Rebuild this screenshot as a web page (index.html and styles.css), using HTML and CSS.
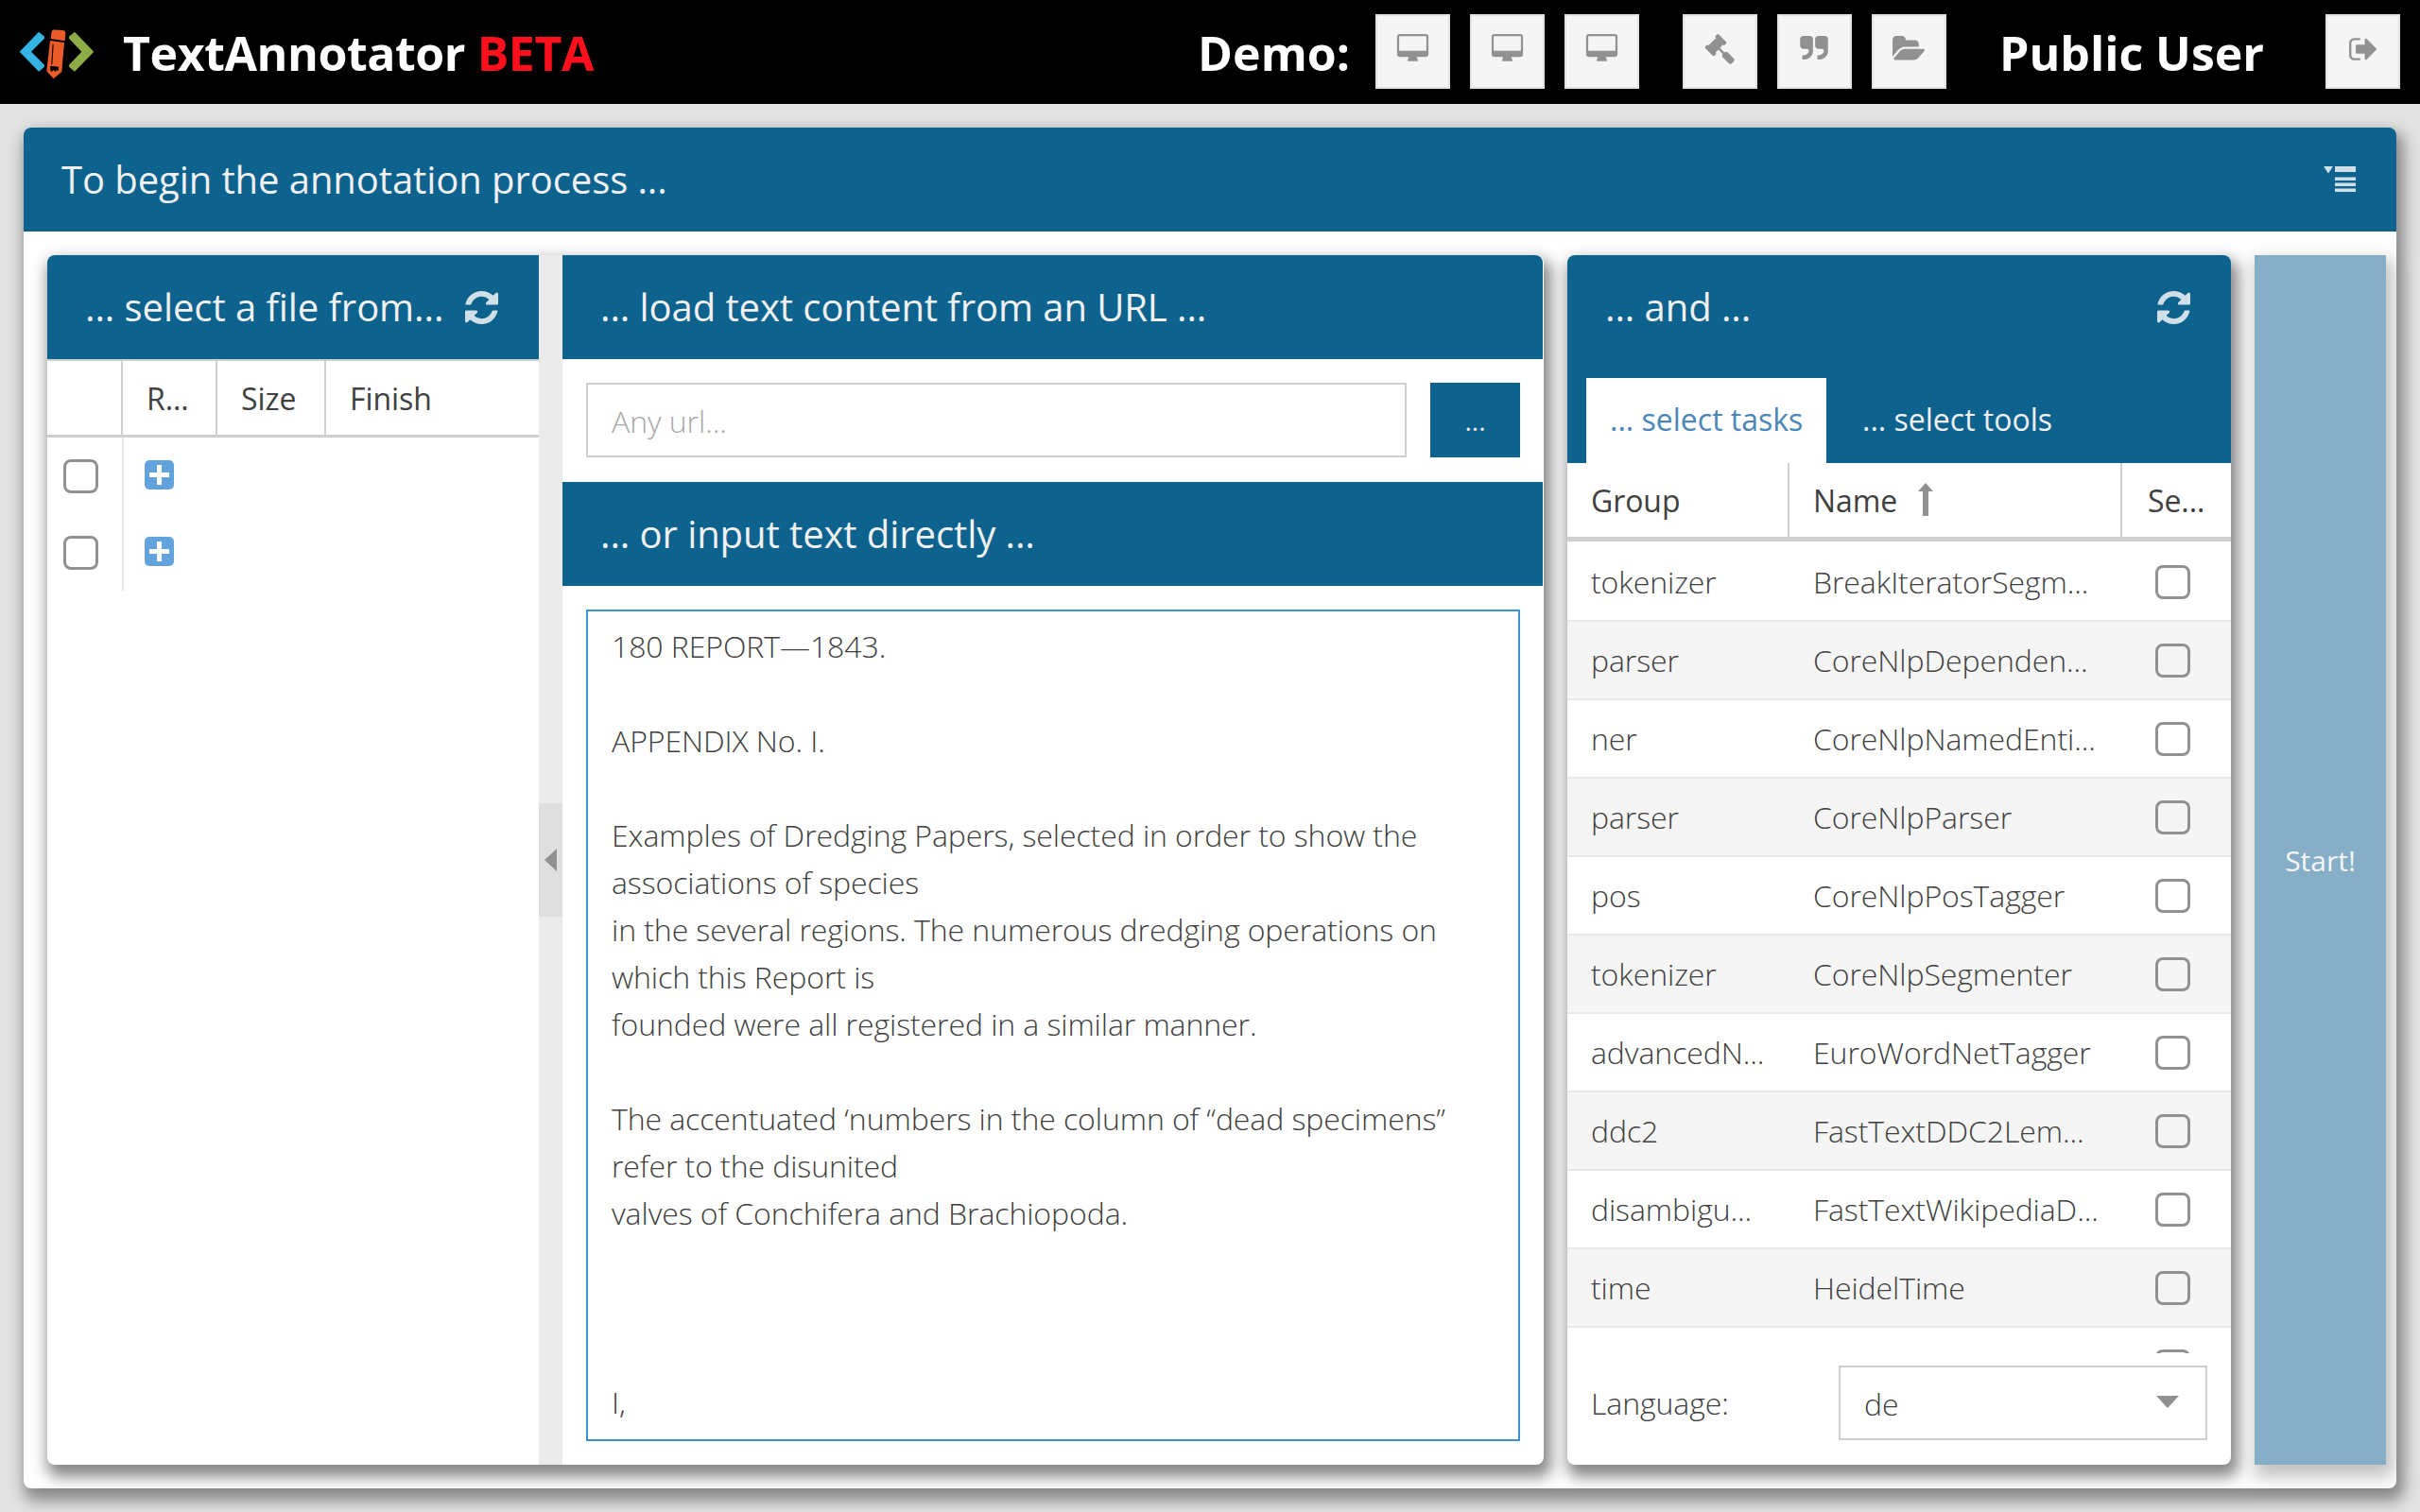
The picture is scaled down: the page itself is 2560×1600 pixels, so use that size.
FILE: index.html
```html
<!DOCTYPE html>
<html lang="en">
<head>
<meta charset="utf-8">
<title>TextAnnotator</title>
<link rel="stylesheet" href="styles.css">
</head>
<body>
<svg class="defs" aria-hidden="true">
  <symbol id="desktop" viewBox="0 0 1920 1792"><path d="M1792 992V160q0-13-9.500-22.500T1760 128H160q-13 0-22.500 9.500T128 160v832q0 13 9.500 22.500t22.500 9.500h1600q13 0 22.500-9.500t9.500-22.500zm128-832v1088q0 66-47 113t-113 47h-544q0 37 16 77.500t32 71 16 43.500q0 26-19 45t-45 19H704q-26 0-45-19t-19-45q0-14 16-44t32-70 16-78H160q-66 0-113-47T0 1248V160Q0 94 47 47T160 0h1600q66 0 113 47t47 113z"/></symbol>
  <symbol id="gavel" viewBox="0 0 1792 1792"><path d="M1771 1536q0 53-37 90l-107 108q-39 37-91 37-53 0-90-37l-363-364q-38-36-38-90 0-53 43-96L832 928l-126 126q-14 14-34 14t-34-14q2 2 12.500 12t12.500 13 10 11.500 10 13.500 6 13.500 5.500 16.500 1.500 18q0 38-28 68-3 3-16.500 18t-19 20.500-18.500 16.500-22 15.500-22 9-26 4.500q-40 0-68-28L68 858q-28-28-28-68 0-13 4.500-26t9-22 15.500-22 16.500-18.500 20.500-19 18-16.500q30-28 68-28 10 0 18 1.500t16.500 5.500 13.500 6 13.500 10 11.500 10 13 12.500 12 12.500q-14-14-14-34t14-34l348-348q14-14 34-14t34 14q-2-2-12.500-12T681 235t-10-11.500-10-13.500-6-13.500-5.500-16.500-1.500-18q0-38 28-68 3-3 16.500-18t19-20.500T730 39t22-15.500 22-9T800 10q40 0 68 28l408 408q28 28 28 68 0 13-4.500 26t-9 22-15.500 22-16.500 18.500-20.500 19-18 16.500q-30 28-68 28-10 0-18-1.500t-16.500-5.500-13.500-6-13.500-10-11.500-10-13-12.500-12-12.500q14 14 14 34t-14 34L928 832l256 256q43-43 96-43 52 0 91 37l363 363q37 39 37 91z"/></symbol>
  <symbol id="quote" viewBox="0 0 1664 1408"><path d="M768 192v704q0 104-40.500 198.500T618 1258t-163.500 109.500T256 1408h-64q-26 0-45-19t-19-45v-128q0-26 19-45t45-19h64q106 0 181-75t75-181v-32q0-40-28-68t-68-28H192q-80 0-136-56T0 576V192Q0 112 56 56T192 0h384q80 0 136 56t56 136zm896 0v704q0 104-40.500 198.500T1514 1258t-163.500 109.500T1152 1408h-64q-26 0-45-19t-19-45v-128q0-26 19-45t45-19h64q106 0 181-75t75-181v-32q0-40-28-68t-68-28h-224q-80 0-136-56t-56-136V192q0-80 56-136t136-56h384q80 0 136 56t56 136z"/></symbol>
  <symbol id="folder" viewBox="0 0 1879 1408"><path d="M1879 808q0 31-31 66l-336 396q-43 51-120.500 86.500T1248 1392H160q-34 0-60.500-13T73 1336q0-31 31-66l336-396q43-51 120.500-86.500T704 752h1088q34 0 60.500 13t26.500 43zM1536 464v160H704q-94 0-197 47.500T343 791L6 1187l-5 6q0-4-.5-12.500T0 1168V208q0-92 66-158T224-16h320q92 0 158 66t66 158v32h544q92 0 158 66t66 158z"/></symbol>
  <symbol id="signout" viewBox="0 0 1568 1280"><path d="M640 1184q0 4 1 20t.5 26.500-3 23.500-10 19.500-20.500 6.500H288q-119 0-203.500-84.500T0 992V288Q0 169 84.500 84.500T288 0h320q13 0 22.500 9.500T640 32q0 4 1 20t.5 26.500-3 23.500-10 19.500T608 128H288q-66 0-113 47t-47 113v704q0 66 47 113t113 47h312l11.500 1 11.500 3 8 5.500 7 9 2 13.500zm928-544q0 26-19 45l-544 544q-19 19-45 19t-45-19-19-45V896H448q-26 0-45-19t-19-45V448q0-26 19-45t45-19h448V96q0-26 19-45t45-19 45 19l544 544q19 19 19 45z"/></symbol>
  <symbol id="refresh" viewBox="0 0 1536 1536"><path d="M1511 928q0 5-1 7-64 268-268 434.500T764 1536q-146 0-282.500-55T238 1324l-129 129q-19 19-45 19t-45-19-19-45V960q0-26 19-45t45-19h448q26 0 45 19t19 45-19 45l-137 137q71 66 161 102t187 36q134 0 250-65t186-179q11-17 53-117 8-23 30-23h192q13 0 22.500 9.500t9.500 22.500zm25-800v448q0 26-19 45t-45 19h-448q-26 0-45-19t-19-45 19-45l138-138Q969 256 768 256q-134 0-250 65T332 500q-11 17-53 117-8 23-30 23H50q-13 0-22.500-9.500T18 608v-7q65-268 270-434.500T768 0q146 0 284 55.500T1297 212l130-129q19-19 45-19t45 19 19 45z"/></symbol>
</svg>

<header class="topbar">
  <svg class="logo" viewBox="0 0 80 72">
    <path d="M21 14.700 27 19.700V21.700L13 35.700 27 49.700V51.700L21 56.700.7 35.700z" fill="#34b4e3"/>
    <path d="M59 14.700 53 19.700V21.700L66.300 35.700 53 49.700V51.700L59 56.700 79.300 35.700z" fill="#8dab46"/>
    <path d="M37 12.600 46.500 13q3 .5 2.900 3.500L48.700 24.300 33.700 22 34.500 15q.3-2.500 2.500-2.400zM33 24 48 26 45.300 57 36.700 64.200 29.300 56.300z" fill="#ea5b27"/>
    <path d="M35.600 27.700h1.100L35.300 49.300h-1.100zM33.300 50.700 42 51.700 41.700 56.300 40 55 38.700 57 36.700 55 34.700 57 33 55z"/>
  </svg>
  <h1 class="brand">TextAnnotator <span class="beta">BETA</span></h1>
  <div class="demo">Demo:</div>
  <div class="tools">
    <button class="tool"><svg class="i-desktop"><use href="#desktop"/></svg></button>
    <button class="tool"><svg class="i-desktop"><use href="#desktop"/></svg></button>
    <button class="tool"><svg class="i-desktop"><use href="#desktop"/></svg></button>
  </div>
  <div class="tools second">
    <button class="tool"><svg class="i-gavel"><use href="#gavel"/></svg></button>
    <button class="tool"><svg class="i-quote"><use href="#quote"/></svg></button>
    <button class="tool"><svg class="i-folder"><use href="#folder"/></svg></button>
  </div>
  <div class="user">Public User</div>
  <button class="tool"><svg class="i-signout"><use href="#signout"/></svg></button>
</header>

<main class="panel main">
  <div class="bar main-bar">
    <span>To begin the annotation process ...</span>
    <svg class="menu" viewBox="0 0 34 28"><path d="M0 0h10L5 7.500zM12 0h22v6H12zM12 11.500h22v3.500H12zM12 17.500h22V21H12zM12 23.500h22V27H12z"/></svg>
  </div>
  <div class="content">
    <div class="panel source">
      <section class="files">
        <div class="bar"><span class="title">... select a file from...</span><svg class="refresh"><use href="#refresh"/></svg></div>
        <div class="file-grid file-head"><div></div><div>R...</div><div>Size</div><div>Finish</div></div>
        <div class="file-grid file-row"><div><i class="check"></i></div><div><i class="plus"></i></div></div>
        <div class="file-grid file-row"><div><i class="check"></i></div><div><i class="plus"></i></div></div>
      </section>
      <div class="splitter"><div class="handle"><i></i></div></div>
      <section class="text">
        <div class="bar">... load text content from an URL ...</div>
        <div class="url-row"><div class="url">Any url...</div><button class="go">...</button></div>
        <div class="bar">... or input text directly ...</div>
        <div class="area-wrap"><div class="area">180 REPORT—1843.

APPENDIX No. I.

Examples of Dredging Papers, selected in order to show the associations of species
in the several regions. The numerous dredging operations on which this Report is
founded were all registered in a similar manner.

The accentuated ‘numbers in the column of “dead specimens” refer to the disunited
valves of Conchifera and Brachiopoda.



I,</div></div>
      </section>
    </div>
    <section class="panel tasks">
      <div class="bar"><span>... and ...</span><svg class="refresh"><use href="#refresh"/></svg></div>
      <div class="tabs"><div class="tab active">... select tasks</div><div class="tab">... select tools</div></div>
      <div class="task-grid task-head"><div>Group</div><div>Name<svg class="sort" viewBox="0 0 16 36"><path d="M8 0l8 9H11v26H5V9H0z"/></svg></div><div>Se...</div></div>
      <div class="task-list">
        <div class="task-grid"><div>tokenizer</div><div>BreakIteratorSegm...</div><div><i class="check"></i></div></div>
        <div class="task-grid"><div>parser</div><div>CoreNlpDependen...</div><div><i class="check"></i></div></div>
        <div class="task-grid"><div>ner</div><div>CoreNlpNamedEnti...</div><div><i class="check"></i></div></div>
        <div class="task-grid"><div>parser</div><div>CoreNlpParser</div><div><i class="check"></i></div></div>
        <div class="task-grid"><div>pos</div><div>CoreNlpPosTagger</div><div><i class="check"></i></div></div>
        <div class="task-grid"><div>tokenizer</div><div>CoreNlpSegmenter</div><div><i class="check"></i></div></div>
        <div class="task-grid"><div>advancedN...</div><div>EuroWordNetTagger</div><div><i class="check"></i></div></div>
        <div class="task-grid"><div>ddc2</div><div>FastTextDDC2Lem...</div><div><i class="check"></i></div></div>
        <div class="task-grid"><div>disambigu...</div><div>FastTextWikipediaD...</div><div><i class="check"></i></div></div>
        <div class="task-grid"><div>time</div><div>HeidelTime</div><div><i class="check"></i></div></div>
        <div class="task-grid"><div></div><div></div><div><i class="check"></i></div></div>
      </div>
      <div class="language"><span>Language:</span><div class="combo">de<i></i></div></div>
    </section>
    <button class="start">Start!</button>
  </div>
</main>
</body>
</html>
```
FILE: styles.css
```css
* { box-sizing: border-box; }
body {
  margin: 0; width: 2560px; height: 1600px; overflow: hidden;
  display: flex; flex-direction: column;
  background: #e3e3e3; color: #404040;
  font: 300 32px/44px "Open Sans", sans-serif;
  letter-spacing: -.08px;
}
button { font: inherit; padding: 0; border: 0; }
.defs { display: none; }

.topbar {
  height: 110px; flex: none; padding: 0 21px 0 20px; background: #000; color: #fff;
  display: flex; align-items: center; font-size: 50px; font-weight: 700; letter-spacing: 0;
}
.logo { width: 80px; height: 72px; }
.brand { margin: 2px auto 0 30px; font-size: 50px; line-height: 68px; letter-spacing: -.42px; }
.beta { color: #ff0e1b; }
.demo, .user { line-height: 68px; margin-top: 2px; }
.demo { margin-right: 27px; }
.tools { display: flex; gap: 21px; }
.second { margin: 0 56px 0 46px; }
.user { margin-right: 65px; }
.tool {
  width: 79px; height: 79px; margin-bottom: 1px; padding-bottom: 8px;
  display: flex; align-items: center; justify-content: center;
  background: #f5f5f5; border: 2px solid #e1e1e1;
}
.tool svg { fill: #919191; }
.i-desktop { width: 35px; height: 31px; margin-top: 2px; }
.i-gavel { width: 32px; height: 32px; margin-top: 2px; }
.i-quote { width: 30px; height: 25px; }
.i-folder { width: 34px; height: 26px; overflow: visible; }
.i-signout { width: 29px; height: 24px; margin-top: 2px; }

.panel { background: #fff; border-radius: 8px; box-shadow: 4px 9px 16px 4px #888; }
.main { width: 2510px; height: 1440px; margin: 25px 0 0 25px; display: flex; flex-direction: column; }
.bar {
  height: 110px; flex: none; padding: 0 40px; background: #0d628e; color: #f0f0f0;
  display: flex; align-items: center; justify-content: space-between;
  font-size: 40px; font-weight: 400; line-height: 54px; white-space: nowrap;
}
.main-bar { border-radius: 8px 8px 0 0; }
.menu { width: 34px; height: 28px; margin-right: 3px; fill: #cfe0e8; }
.refresh { width: 35px; height: 35px; fill: #cfe0e8; }
.content { flex: 1; padding: 25px 11px 25px 25px; display: flex; gap: 25px; }

.source { width: 1583px; display: flex; }
.files { width: 520px; }
.files .bar { border-radius: 8px 0 0 0; padding-right: 43px; }
.file-grid { display: grid; grid-template-columns: 79px 100px 115px 1fr; }
.file-head { height: 83px; border-top: 2px solid #d0d0d0; border-bottom: 3px solid #d0d0d0; font-weight: 400; }
.file-head div { padding: 18px 0 0 25px; border-left: 2px solid #d0d0d0; margin-left: -1px; }
.file-head div:first-child { border: 0; }
.file-row { height: 81px; }
.file-row > div { display: flex; align-items: center; padding-left: 17px; }
.file-row > div + div { border-left: 2px solid #e8e8e8; padding: 0 0 3px 22px; }
.check { width: 37px; height: 36px; border: 3px solid #919191; border-radius: 8px; }
.plus {
  width: 31px; height: 31px; border-radius: 5px;
  background:
    linear-gradient(#fff, #fff) center / 21px 5px no-repeat,
    linear-gradient(#fff, #fff) center / 5px 21px no-repeat, #62a3dd;
}
.splitter { width: 25px; background: #ebebeb; display: flex; align-items: center; }
.handle { width: 25px; height: 120px; background: #dfdfdf; display: flex; align-items: center; justify-content: center; }
.handle i { border: solid transparent; border-width: 12px 13px 12px 0; border-right-color: #919191; }

.text { width: 1037px; display: flex; flex-direction: column; }
.text .bar:first-child { border-radius: 0 8px 0 0; }
.url-row { display: flex; gap: 25px; padding: 25px 24px 25px 25px; height: 130px; }
.url { flex: 1; height: 79px; border: 2px solid #cfcfcf; padding: 17px 25px; color: #a8a8a8; }
.go { width: 95px; height: 79px; background: #0d628e; color: #f0f0f0; font-weight: 400; font-size: 28px; }
.area-wrap { flex: 1; padding: 25px 24px 25px 25px; }
.area { height: 880px; border: 2px solid #3c92d4; padding: 12px 25px; line-height: 50px; white-space: pre-wrap; }

.tasks { width: 702px; display: flex; flex-direction: column; }
.tasks .bar { border-radius: 8px 8px 0 0; padding-right: 43px; }
.tabs { height: 110px; background: #0d628e; display: flex; align-items: flex-end; gap: 13px; padding-left: 20px; }
.tab { height: 90px; width: 254px; padding: 22px 0 0 25px; color: #f0f0f0; font-weight: 400; white-space: nowrap; letter-spacing: 0; }
.active { background: #fff; color: #4c86b7; }
.task-grid { display: grid; grid-template-columns: 235px 352px 115px; white-space: nowrap; }
.task-head { height: 83px; flex: none; border-bottom: 5px solid #d0d0d0; font-weight: 400; }
.task-head > div { padding: 18px 0 0 25px; border-left: 2px solid #d0d0d0; margin-left: -2px; }
.task-head > div:nth-child(3) { padding-left: 27px; }
.task-head > div:first-child { border: 0; margin: 0; }
.sort { width: 16px; height: 36px; margin-left: 22px; vertical-align: -5px; fill: #919191; }
.task-list { height: 859px; padding-top: 2px; overflow: hidden; }
.task-list .task-grid { height: 83px; border-bottom: 2px solid #e8e8e8; align-items: center; }
.task-list .task-grid:nth-child(even) { background: #f5f5f5; }
.task-list .task-grid > div { padding-left: 25px; }
.task-list .task-grid > div:last-child { padding-left: 35px; display: flex; }
.language { flex: 1; display: flex; justify-content: space-between; padding: 13px 25px 0 25px; }
.language span { padding-top: 18px; }
.combo { width: 390px; height: 79px; border: 2px solid #cfcfcf; padding: 2px 28px 0 25px; display: flex; align-items: center; justify-content: space-between; }
.combo i { border: solid transparent; border-width: 13px 12px 0; border-top-color: #919191; margin-top: -5px; }
.start { width: 139px; padding-top: 2px; background: #86afc7; color: #f5f5f5; font-weight: 400; font-size: 30px; box-shadow: 4px 9px 16px 4px rgba(136, 136, 136, .5); }
```
